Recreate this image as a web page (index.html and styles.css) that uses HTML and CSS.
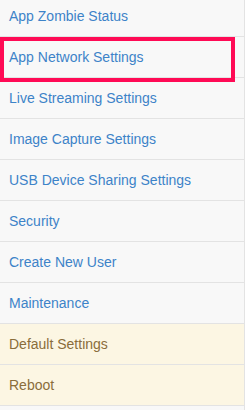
FILE: index.html
```html
<!DOCTYPE html>
<html>
<head>
<meta charset="utf-8">
<link rel="stylesheet" href="styles.css">
</head>
<body>
<div class="menu">
  <a class="item">App Zombie Status</a>
  <a class="item">App Network Settings</a>
  <a class="item">Live Streaming Settings</a>
  <a class="item">Image Capture Settings</a>
  <a class="item">USB Device Sharing Settings</a>
  <a class="item">Security</a>
  <a class="item">Create New User</a>
  <a class="item">Maintenance</a>
  <a class="item warn">Default Settings</a>
  <a class="item warn">Reboot</a>
  <a class="item">&nbsp;</a>
  <div class="highlight"></div>
</div>
</body>
</html>
```
FILE: styles.css
```css
html, body {
  margin: 0;
  padding: 0;
  background: #f8f8f8;
  overflow: hidden;
}
.menu {
  position: relative;
  margin-top: -5px;
  width: 244px;
  border-right: 1px solid #e3e3e3;
  font-family: "Liberation Sans", Arial, sans-serif;
  font-size: 14px;
  line-height: 20px;
}
.item {
  display: block;
  padding: 10px 9px;
  border-top: 1px solid #e3e3e3;
  color: #3d83c8;
  background: #f8f8f8;
  text-decoration: none;
}
.item.warn {
  background: #fcf6e3;
  color: #8a6d3b;
}
.highlight {
  position: absolute;
  left: 0;
  top: 42px;
  width: 227px;
  height: 37px;
  border: 4px solid #ff0a55;
}
```
